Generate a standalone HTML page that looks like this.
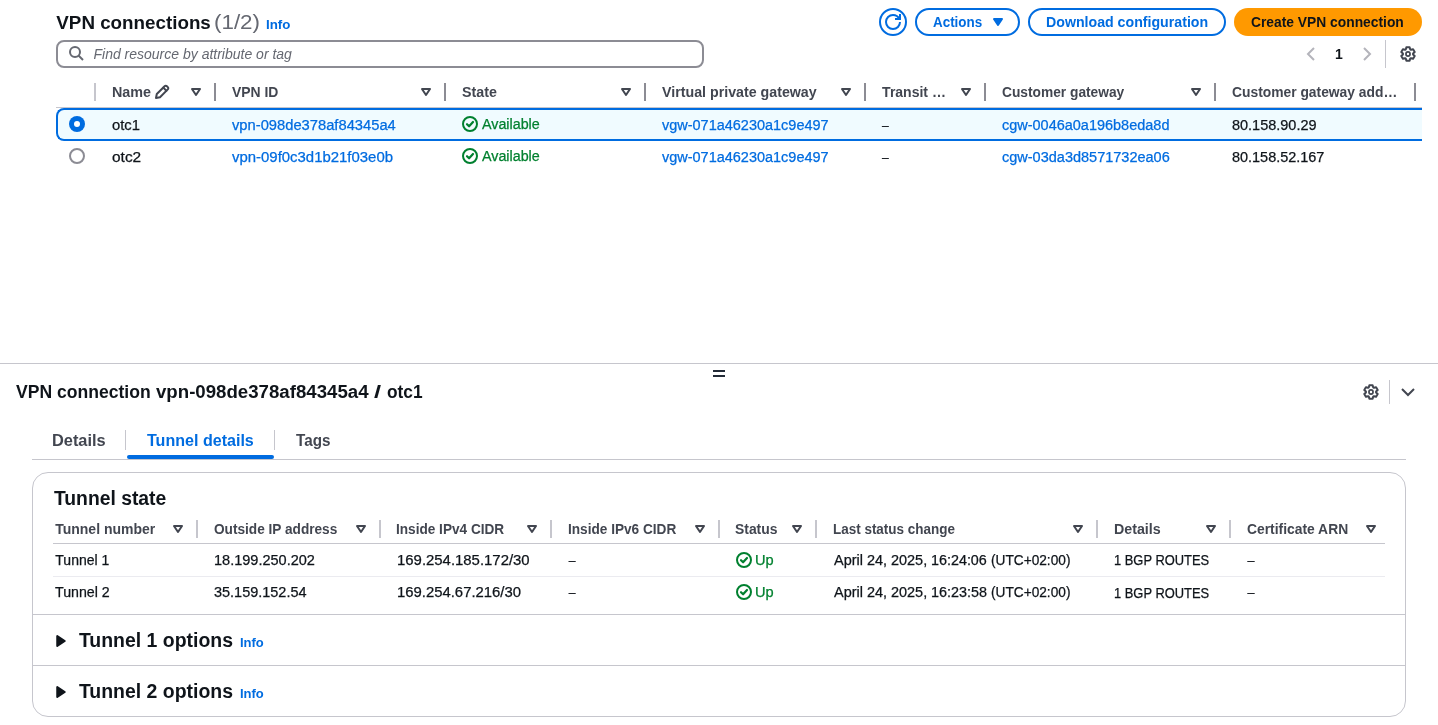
<!DOCTYPE html>
<html lang="en"><head><meta charset="utf-8"><title>VPN connections</title>
<style>
html,body{margin:0;padding:0;background:#fff;}
body{width:1438px;height:725px;position:relative;overflow:hidden;font-family:"Liberation Sans",Arial,sans-serif;}
#shapes div,#icons svg,#text span{position:absolute;}
#text span{white-space:pre;line-height:1;transform-origin:0 0;}
#icons svg{overflow:visible;}
#text{will-change:transform;}
</style></head><body>
<div id="shapes">
<div style="left:94px;top:83px;width:2px;height:18px;background:#c6c6cd"></div>
<div style="left:214px;top:83px;width:2px;height:18px;background:#8c8c94"></div>
<div style="left:444px;top:83px;width:2px;height:18px;background:#8c8c94"></div>
<div style="left:644px;top:83px;width:2px;height:18px;background:#8c8c94"></div>
<div style="left:864px;top:83px;width:2px;height:18px;background:#8c8c94"></div>
<div style="left:984px;top:83px;width:2px;height:18px;background:#8c8c94"></div>
<div style="left:1214px;top:83px;width:2px;height:18px;background:#8c8c94"></div>
<div style="left:1414px;top:83px;width:2px;height:18px;background:#8c8c94"></div>
<div style="left:56px;top:107px;width:1366px;height:1px;background:#c6c6cd"></div>
<div style="left:56px;top:108px;width:1366px;height:33px;background:#f0fbff;border:2px solid #006ce0;border-right:none;border-radius:8px 0 0 8px;box-sizing:border-box"></div>
<div style="left:69px;top:116.2px;width:16px;height:16px;border-radius:50%;background:#006ce0"></div>
<div style="left:73.7px;top:120.9px;width:6.6px;height:6.6px;border-radius:50%;background:#fff"></div>
<div style="left:69px;top:148.2px;width:16px;height:16px;border-radius:50%;border:2px solid #8c8c94;box-sizing:border-box;background:#fff"></div>
<div style="left:56px;top:39.5px;width:648px;height:28.5px;border:2px solid #8c8c94;border-radius:8px;box-sizing:border-box;background:#fff"></div>
<div style="left:879px;top:8px;width:28px;height:28px;border:2px solid #006ce0;border-radius:50%;box-sizing:border-box"></div>
<div style="left:915px;top:8px;width:104.5px;height:28px;border:2px solid #006ce0;border-radius:14px;box-sizing:border-box"></div>
<div style="left:1028px;top:8px;width:198px;height:28px;border:2px solid #006ce0;border-radius:14px;box-sizing:border-box"></div>
<div style="left:1234px;top:8px;width:188px;height:28px;background:#ff9900;border-radius:14px"></div>
<div style="left:1385px;top:40px;width:1px;height:28px;background:#c6c6cd"></div>
<div style="left:0px;top:363px;width:1438px;height:1px;background:#c6c6cd"></div>
<div style="left:713px;top:370px;width:12px;height:2px;background:#232b37"></div>
<div style="left:713px;top:375px;width:12px;height:2px;background:#232b37"></div>
<div style="left:1389px;top:380px;width:1px;height:24px;background:#c6c6cd"></div>
<div style="left:32px;top:459px;width:1374px;height:1px;background:#c6c6cd"></div>
<div style="left:125px;top:430px;width:1px;height:20px;background:#c6c6cd"></div>
<div style="left:274px;top:430px;width:1px;height:20px;background:#c6c6cd"></div>
<div style="left:127px;top:455px;width:147px;height:4px;background:#006ce0;border-radius:2px"></div>
<div style="left:32px;top:472px;width:1374px;height:245px;border:1px solid #c6c6cd;border-radius:16px;box-sizing:border-box"></div>
<div style="left:53px;top:543px;width:1332px;height:1px;background:#c6c6cd"></div>
<div style="left:53px;top:576px;width:1332px;height:1px;background:#ebebf0"></div>
<div style="left:33px;top:614px;width:1372px;height:1px;background:#c6c6cd"></div>
<div style="left:33px;top:665px;width:1372px;height:1px;background:#c6c6cd"></div>
<div style="left:196px;top:520px;width:2px;height:18px;background:#c6c6cd"></div>
<div style="left:379px;top:520px;width:2px;height:18px;background:#c6c6cd"></div>
<div style="left:550px;top:520px;width:2px;height:18px;background:#c6c6cd"></div>
<div style="left:718px;top:520px;width:2px;height:18px;background:#c6c6cd"></div>
<div style="left:815px;top:520px;width:2px;height:18px;background:#c6c6cd"></div>
<div style="left:1096px;top:520px;width:2px;height:18px;background:#c6c6cd"></div>
<div style="left:1229px;top:520px;width:2px;height:18px;background:#c6c6cd"></div>
</div>
<div id="icons">
<svg style="left:187.8px;top:84.2px" width="16" height="16" viewBox="0 0 16 16"><path d="M4 5h8l-4 6-4-6z" fill="none" stroke="#424650" stroke-width="2" stroke-linejoin="round"/></svg>
<svg style="left:418px;top:84.2px" width="16" height="16" viewBox="0 0 16 16"><path d="M4 5h8l-4 6-4-6z" fill="none" stroke="#424650" stroke-width="2" stroke-linejoin="round"/></svg>
<svg style="left:618px;top:84.2px" width="16" height="16" viewBox="0 0 16 16"><path d="M4 5h8l-4 6-4-6z" fill="none" stroke="#424650" stroke-width="2" stroke-linejoin="round"/></svg>
<svg style="left:838px;top:84.2px" width="16" height="16" viewBox="0 0 16 16"><path d="M4 5h8l-4 6-4-6z" fill="none" stroke="#424650" stroke-width="2" stroke-linejoin="round"/></svg>
<svg style="left:958px;top:84.2px" width="16" height="16" viewBox="0 0 16 16"><path d="M4 5h8l-4 6-4-6z" fill="none" stroke="#424650" stroke-width="2" stroke-linejoin="round"/></svg>
<svg style="left:1188.3px;top:84.2px" width="16" height="16" viewBox="0 0 16 16"><path d="M4 5h8l-4 6-4-6z" fill="none" stroke="#424650" stroke-width="2" stroke-linejoin="round"/></svg>
<svg style="left:170px;top:521.2px" width="16" height="16" viewBox="0 0 16 16"><path d="M4 5h8l-4 6-4-6z" fill="none" stroke="#424650" stroke-width="2" stroke-linejoin="round"/></svg>
<svg style="left:353px;top:521.2px" width="16" height="16" viewBox="0 0 16 16"><path d="M4 5h8l-4 6-4-6z" fill="none" stroke="#424650" stroke-width="2" stroke-linejoin="round"/></svg>
<svg style="left:524px;top:521.2px" width="16" height="16" viewBox="0 0 16 16"><path d="M4 5h8l-4 6-4-6z" fill="none" stroke="#424650" stroke-width="2" stroke-linejoin="round"/></svg>
<svg style="left:692px;top:521.2px" width="16" height="16" viewBox="0 0 16 16"><path d="M4 5h8l-4 6-4-6z" fill="none" stroke="#424650" stroke-width="2" stroke-linejoin="round"/></svg>
<svg style="left:789px;top:521.2px" width="16" height="16" viewBox="0 0 16 16"><path d="M4 5h8l-4 6-4-6z" fill="none" stroke="#424650" stroke-width="2" stroke-linejoin="round"/></svg>
<svg style="left:1070px;top:521.2px" width="16" height="16" viewBox="0 0 16 16"><path d="M4 5h8l-4 6-4-6z" fill="none" stroke="#424650" stroke-width="2" stroke-linejoin="round"/></svg>
<svg style="left:1203px;top:521.2px" width="16" height="16" viewBox="0 0 16 16"><path d="M4 5h8l-4 6-4-6z" fill="none" stroke="#424650" stroke-width="2" stroke-linejoin="round"/></svg>
<svg style="left:1363px;top:521.2px" width="16" height="16" viewBox="0 0 16 16"><path d="M4 5h8l-4 6-4-6z" fill="none" stroke="#424650" stroke-width="2" stroke-linejoin="round"/></svg>
<svg style="left:462px;top:116.2px" width="16" height="16" viewBox="0 0 16 16" fill="none" stroke="#00802f" stroke-width="2" stroke-linecap="round" stroke-linejoin="round"><circle cx="8" cy="8" r="7"/><path d="M5 8.2 L7.1 10.3 L11 6" stroke-width="2.2"/></svg>
<svg style="left:462px;top:148px" width="16" height="16" viewBox="0 0 16 16" fill="none" stroke="#00802f" stroke-width="2" stroke-linecap="round" stroke-linejoin="round"><circle cx="8" cy="8" r="7"/><path d="M5 8.2 L7.1 10.3 L11 6" stroke-width="2.2"/></svg>
<svg style="left:736px;top:552px" width="16" height="16" viewBox="0 0 16 16" fill="none" stroke="#00802f" stroke-width="2" stroke-linecap="round" stroke-linejoin="round"><circle cx="8" cy="8" r="7"/><path d="M5 8.2 L7.1 10.3 L11 6" stroke-width="2.2"/></svg>
<svg style="left:736px;top:584px" width="16" height="16" viewBox="0 0 16 16" fill="none" stroke="#00802f" stroke-width="2" stroke-linecap="round" stroke-linejoin="round"><circle cx="8" cy="8" r="7"/><path d="M5 8.2 L7.1 10.3 L11 6" stroke-width="2.2"/></svg>
<svg style="left:68px;top:45.4px" width="16" height="16" viewBox="0 0 16 16" fill="none" stroke="#656871" stroke-width="2"><circle cx="7" cy="7" r="5"/><path d="m15 15-4.5-4.5"/></svg>
<svg style="left:154px;top:84px" width="16" height="16" viewBox="0 0 16 16" fill="none" stroke="#424650" stroke-width="2" stroke-linejoin="round" stroke-linecap="round"><path d="M10.6 2.2 a1.6 1.6 0 0 1 2.3 0 l0.9 0.9 a1.6 1.6 0 0 1 0 2.3 L6 13.2 L2 14 L2.8 10 Z"/><path d="M9.3 3.6 L12.4 6.7"/></svg>
<svg style="left:885px;top:14px" width="16" height="16" viewBox="0 0 16 16" fill="none" stroke="#006ce0" stroke-width="2" stroke-linejoin="round"><path d="M15 8c0 3.87-3.13 7-7 7s-7-3.13-7-7 3.13-7 7-7c2.79 0 5.2 1.63 6.33 4"/><path d="M10 5h5V0" stroke-linejoin="miter"/></svg>
<svg style="left:990px;top:14.1px" width="16" height="16" viewBox="0 0 16 16"><path d="M4 5h8l-4 6-4-6z" fill="#006ce0" stroke="#006ce0" stroke-width="2" stroke-linejoin="round"/></svg>
<svg style="left:1303px;top:46px" width="16" height="16" viewBox="0 0 16 16" fill="none" stroke="#b4b4bb" stroke-width="2" stroke-linejoin="miter"><path d="M11 2 5 8l6 6"/></svg>
<svg style="left:1359px;top:46px" width="16" height="16" viewBox="0 0 16 16" fill="none" stroke="#b4b4bb" stroke-width="2" stroke-linejoin="miter"><path d="m5 2 6 6-6 6"/></svg>
<svg style="left:1400px;top:46px" width="16" height="16" viewBox="0 0 16 16" fill="none" stroke="#424650" stroke-width="2" stroke-linejoin="round"><path d="M10.16 3.38 L9.63 1.19 L6.37 1.19 L5.84 3.38 L5.07 3.82 L2.92 3.18 L1.29 6.01 L2.92 7.56 L2.92 8.44 L1.29 9.99 L2.92 12.82 L5.07 12.18 L5.84 12.62 L6.37 14.81 L9.63 14.81 L10.16 12.62 L10.93 12.18 L13.08 12.82 L14.71 9.99 L13.08 8.44 L13.08 7.56 L14.71 6.01 L13.08 3.18 L10.93 3.82 Z"/><circle cx="8" cy="8" r="2.05" stroke-width="1.7"/></svg>
<svg style="left:1363px;top:384px" width="16" height="16" viewBox="0 0 16 16" fill="none" stroke="#424650" stroke-width="2" stroke-linejoin="round"><path d="M10.16 3.38 L9.63 1.19 L6.37 1.19 L5.84 3.38 L5.07 3.82 L2.92 3.18 L1.29 6.01 L2.92 7.56 L2.92 8.44 L1.29 9.99 L2.92 12.82 L5.07 12.18 L5.84 12.62 L6.37 14.81 L9.63 14.81 L10.16 12.62 L10.93 12.18 L13.08 12.82 L14.71 9.99 L13.08 8.44 L13.08 7.56 L14.71 6.01 L13.08 3.18 L10.93 3.82 Z"/><circle cx="8" cy="8" r="2.05" stroke-width="1.7"/></svg>
<svg style="left:1400px;top:383.7px" width="16" height="16" viewBox="0 0 16 16" fill="none" stroke="#424650" stroke-width="2" stroke-linejoin="miter"><path d="m2 5 6 6 6-6"/></svg>
<svg style="left:51px;top:631.3px" width="20" height="20" viewBox="0 0 16 16"><path d="M5 4v8l6-4-6-4z" fill="#0f141a" stroke="#0f141a" stroke-width="1.6" stroke-linejoin="round"/></svg>
<svg style="left:51px;top:682.1px" width="20" height="20" viewBox="0 0 16 16"><path d="M5 4v8l6-4-6-4z" fill="#0f141a" stroke="#0f141a" stroke-width="1.6" stroke-linejoin="round"/></svg>
</div>
<div id="text">
<span id="t1" style="left:56.35px;top:14.01px;font-size:18.8px;color:#0f141a;font-weight:700;">VPN connections</span>
<span id="t2" style="left:214.46px;top:13.01px;font-size:19.5px;color:#656871;transform:scaleX(1.148);">(1/2)</span>
<span id="t3" style="left:265.84px;top:19.01px;font-size:12px;color:#006ce0;font-weight:700;transform:scaleX(1.110);">Info</span>
<span id="t4" style="left:93.48px;top:47.01px;font-size:14px;color:#656871;font-style:italic;">Find resource by attribute or tag</span>
<span id="t5" style="left:933.16px;top:15.01px;font-size:14px;color:#006ce0;font-weight:700;transform:scaleX(0.957);">Actions</span>
<span id="t6" style="left:1045.67px;top:15.00px;font-size:14px;color:#006ce0;font-weight:700;transform:scaleX(1.012);">Download configuration</span>
<span id="t7" style="left:1250.87px;top:15.01px;font-size:14px;color:#0f141a;font-weight:700;transform:scaleX(0.987);">Create VPN connection</span>
<span id="t8" style="left:1334.70px;top:47.00px;font-size:14px;color:#0f141a;font-weight:700;transform:scaleX(0.986);">1</span>
<span id="t9" style="left:111.63px;top:85.01px;font-size:14px;color:#424650;font-weight:700;transform:scaleX(1.024);">Name</span>
<span id="t10" style="left:232.25px;top:85.01px;font-size:14px;color:#424650;font-weight:700;transform:scaleX(0.994);">VPN ID</span>
<span id="t11" style="left:461.60px;top:85.01px;font-size:14px;color:#424650;font-weight:700;transform:scaleX(1.019);">State</span>
<span id="t12" style="left:662.16px;top:85.01px;font-size:14px;color:#424650;font-weight:700;transform:scaleX(1.016);">Virtual private gateway</span>
<span id="t13" style="left:882.12px;top:85.01px;font-size:14px;color:#424650;font-weight:700;">Transit …</span>
<span id="t14" style="left:1001.70px;top:85.01px;font-size:14px;color:#424650;font-weight:700;transform:scaleX(0.982);">Customer gateway</span>
<span id="t15" style="left:1232.48px;top:85.01px;font-size:14px;color:#424650;font-weight:700;transform:scaleX(0.988);">Customer gateway add…</span>
<span id="t16" style="left:111.55px;top:118.01px;font-size:14px;color:#0f141a;-webkit-text-stroke:0.25px;transform:scaleX(1.056);">otc1</span>
<span id="t17" style="left:231.89px;top:118.01px;font-size:14px;color:#006ce0;-webkit-text-stroke:0.25px;transform:scaleX(1.052);">vpn-098de378af84345a4</span>
<span id="t18" style="left:482.48px;top:117.01px;font-size:14px;color:#00802f;-webkit-text-stroke:0.25px;transform:scaleX(1.021);">Available</span>
<span id="t19" style="left:662.35px;top:118.01px;font-size:14px;color:#006ce0;-webkit-text-stroke:0.25px;transform:scaleX(1.034);">vgw-071a46230a1c9e497</span>
<span id="t20" style="left:882.12px;top:121.01px;font-size:11.97px;color:#0f141a;-webkit-text-stroke:0.25px;">–</span>
<span id="t21" style="left:1001.60px;top:118.01px;font-size:14px;color:#006ce0;-webkit-text-stroke:0.25px;transform:scaleX(1.034);">cgw-0046a0a196b8eda8d</span>
<span id="t22" style="left:1232.26px;top:118.01px;font-size:14px;color:#0f141a;-webkit-text-stroke:0.25px;transform:scaleX(1.034);">80.158.90.29</span>
<span id="t23" style="left:112.25px;top:150.01px;font-size:14px;color:#0f141a;-webkit-text-stroke:0.25px;transform:scaleX(1.103);">otc2</span>
<span id="t24" style="left:231.89px;top:150.01px;font-size:14px;color:#006ce0;-webkit-text-stroke:0.25px;transform:scaleX(1.066);">vpn-09f0c3d1b21f03e0b</span>
<span id="t25" style="left:482.48px;top:149.01px;font-size:14px;color:#00802f;-webkit-text-stroke:0.25px;transform:scaleX(1.021);">Available</span>
<span id="t26" style="left:662.35px;top:150.01px;font-size:14px;color:#006ce0;-webkit-text-stroke:0.25px;transform:scaleX(1.034);">vgw-071a46230a1c9e497</span>
<span id="t27" style="left:882.12px;top:153.01px;font-size:11.97px;color:#0f141a;-webkit-text-stroke:0.25px;">–</span>
<span id="t28" style="left:1001.60px;top:150.01px;font-size:14px;color:#006ce0;-webkit-text-stroke:0.25px;transform:scaleX(1.036);">cgw-03da3d8571732ea06</span>
<span id="t29" style="left:1232.29px;top:150.01px;font-size:14px;color:#0f141a;-webkit-text-stroke:0.25px;transform:scaleX(1.032);">80.158.52.167</span>
<span id="t30" style="left:16.16px;top:383.01px;font-size:18px;color:#0f141a;font-weight:700;transform:scaleX(0.976);">VPN connection</span>
<span id="t31" style="left:156.01px;top:383.01px;font-size:18px;color:#0f141a;font-weight:700;transform:scaleX(1.036);">vpn-098de378af84345a4</span>
<span id="t32" style="left:374.11px;top:383.01px;font-size:18px;color:#0f141a;font-weight:700;transform:scaleX(1.421);">/</span>
<span id="t33" style="left:386.94px;top:383.01px;font-size:18px;color:#0f141a;font-weight:700;transform:scaleX(0.962);">otc1</span>
<span id="t34" style="left:52.19px;top:433.00px;font-size:16px;color:#424650;font-weight:700;transform:scaleX(1.022);">Details</span>
<span id="t35" style="left:147.21px;top:433.00px;font-size:16px;color:#006ce0;font-weight:700;transform:scaleX(1.004);">Tunnel details</span>
<span id="t36" style="left:295.88px;top:433.00px;font-size:16px;color:#424650;font-weight:700;transform:scaleX(0.951);">Tags</span>
<span id="t37" style="left:53.90px;top:489.01px;font-size:19.33px;color:#0f141a;font-weight:700;">Tunnel state</span>
<span id="t38" style="left:55.21px;top:522.00px;font-size:14px;color:#424650;font-weight:700;">Tunnel number</span>
<span id="t39" style="left:214.33px;top:522.00px;font-size:14px;color:#424650;font-weight:700;transform:scaleX(0.974);">Outside IP address</span>
<span id="t40" style="left:396.45px;top:522.00px;font-size:14px;color:#424650;font-weight:700;transform:scaleX(0.972);">Inside IPv4 CIDR</span>
<span id="t41" style="left:568.40px;top:522.00px;font-size:14px;color:#424650;font-weight:700;transform:scaleX(0.973);">Inside IPv6 CIDR</span>
<span id="t42" style="left:735.07px;top:522.00px;font-size:14px;color:#424650;font-weight:700;transform:scaleX(0.992);">Status</span>
<span id="t43" style="left:832.67px;top:522.00px;font-size:14px;color:#424650;font-weight:700;transform:scaleX(0.961);">Last status change</span>
<span id="t44" style="left:1113.63px;top:522.00px;font-size:14px;color:#424650;font-weight:700;transform:scaleX(1.017);">Details</span>
<span id="t45" style="left:1246.70px;top:522.00px;font-size:14px;color:#424650;font-weight:700;transform:scaleX(0.990);">Certificate ARN</span>
<span id="t46" style="left:55.34px;top:553.01px;font-size:14px;color:#0f141a;-webkit-text-stroke:0.25px;">Tunnel 1</span>
<span id="t47" style="left:213.73px;top:553.01px;font-size:14px;color:#0f141a;-webkit-text-stroke:0.25px;transform:scaleX(1.037);">18.199.250.202</span>
<span id="t48" style="left:396.63px;top:553.01px;font-size:14px;color:#0f141a;-webkit-text-stroke:0.25px;transform:scaleX(1.065);">169.254.185.172/30</span>
<span id="t49" style="left:568.81px;top:555.00px;font-size:12.11px;color:#0f141a;-webkit-text-stroke:0.25px;">–</span>
<span id="t50" style="left:754.76px;top:553.01px;font-size:14px;color:#00802f;-webkit-text-stroke:0.25px;transform:scaleX(1.042);">Up</span>
<span id="t51" style="left:833.51px;top:553.01px;font-size:14px;color:#0f141a;-webkit-text-stroke:0.25px;transform:scaleX(1.032);">April 24, 2025,</span>
<span id="t52" style="left:930.92px;top:553.01px;font-size:14px;color:#0f141a;-webkit-text-stroke:0.25px;transform:scaleX(1.024);">16:24:06</span>
<span id="t53" style="left:990.82px;top:553.01px;font-size:14px;color:#0f141a;-webkit-text-stroke:0.25px;transform:scaleX(0.977);">(UTC+02:00)</span>
<span id="t54" style="left:1113.56px;top:553.01px;font-size:14px;color:#0f141a;-webkit-text-stroke:0.25px;transform:scaleX(0.922);">1 BGP ROUTES</span>
<span id="t55" style="left:1247.38px;top:555.01px;font-size:12.54px;color:#0f141a;-webkit-text-stroke:0.25px;">–</span>
<span id="t56" style="left:54.83px;top:585.00px;font-size:14px;color:#0f141a;-webkit-text-stroke:0.25px;transform:scaleX(1.015);">Tunnel 2</span>
<span id="t57" style="left:213.53px;top:585.00px;font-size:14px;color:#0f141a;-webkit-text-stroke:0.25px;transform:scaleX(1.033);">35.159.152.54</span>
<span id="t58" style="left:396.63px;top:585.00px;font-size:14px;color:#0f141a;-webkit-text-stroke:0.25px;transform:scaleX(1.062);">169.254.67.216/30</span>
<span id="t59" style="left:568.81px;top:587.00px;font-size:12.11px;color:#0f141a;-webkit-text-stroke:0.25px;">–</span>
<span id="t60" style="left:754.76px;top:585.00px;font-size:14px;color:#00802f;-webkit-text-stroke:0.25px;transform:scaleX(1.042);">Up</span>
<span id="t61" style="left:833.51px;top:585.00px;font-size:14px;color:#0f141a;-webkit-text-stroke:0.25px;transform:scaleX(1.032);">April 24, 2025,</span>
<span id="t62" style="left:930.92px;top:585.00px;font-size:14px;color:#0f141a;-webkit-text-stroke:0.25px;transform:scaleX(1.025);">16:23:58</span>
<span id="t63" style="left:990.82px;top:585.00px;font-size:14px;color:#0f141a;-webkit-text-stroke:0.25px;transform:scaleX(0.977);">(UTC+02:00)</span>
<span id="t64" style="left:1113.56px;top:586.01px;font-size:14px;color:#0f141a;-webkit-text-stroke:0.25px;transform:scaleX(0.922);">1 BGP ROUTES</span>
<span id="t65" style="left:1247.38px;top:587.00px;font-size:12.54px;color:#0f141a;-webkit-text-stroke:0.25px;">–</span>
<span id="t66" style="left:78.90px;top:631.01px;font-size:19.44px;color:#0f141a;font-weight:700;">Tunnel 1 options</span>
<span id="t67" style="left:239.75px;top:637.01px;font-size:12px;color:#006ce0;font-weight:700;transform:scaleX(1.082);">Info</span>
<span id="t68" style="left:78.90px;top:682.01px;font-size:19.44px;color:#0f141a;font-weight:700;">Tunnel 2 options</span>
<span id="t69" style="left:239.75px;top:688.01px;font-size:12px;color:#006ce0;font-weight:700;transform:scaleX(1.082);">Info</span>
</div>
</body></html>
